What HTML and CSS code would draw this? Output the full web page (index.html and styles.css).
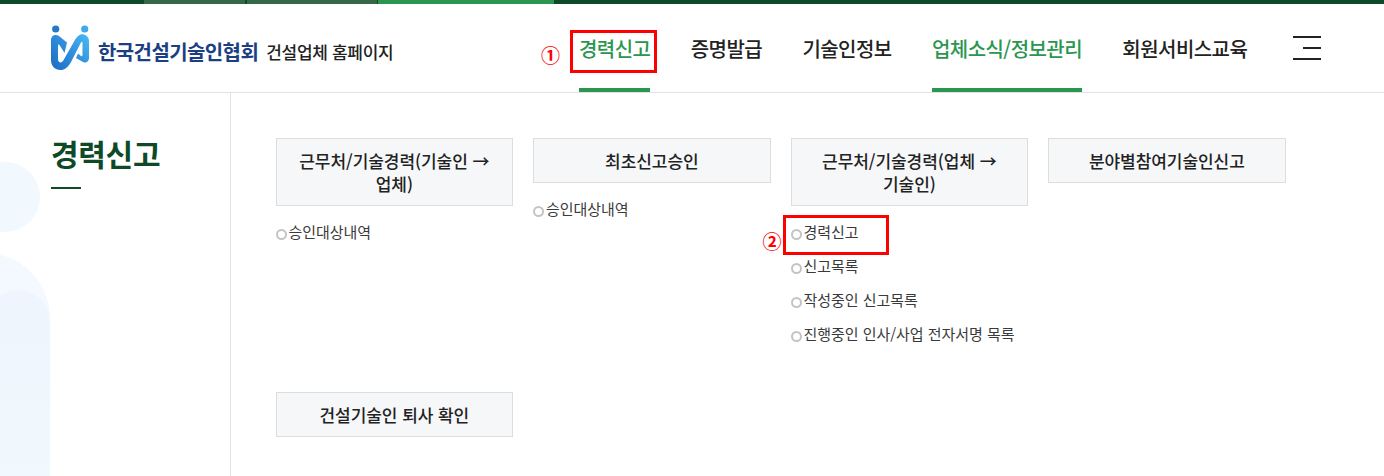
FILE: index.html
```html
<!DOCTYPE html>
<html lang="ko">
<head>
<meta charset="utf-8">
<title>경력신고</title>
<link rel="stylesheet" href="styles.css">
</head>
<body>
<div class="topbar">
  <span class="seg seg-a"></span><span class="seg seg-b"></span><span class="seg seg-c"></span><span class="seg seg-d"></span><span class="seg seg-e"></span>
</div>
<header class="header">
  <a class="logo">
    <svg class="logo-mark" width="38" height="45" viewBox="0 0 38 45">
      <defs>
        <linearGradient id="lg1" x1="0" y1="1" x2="1" y2="0.2">
          <stop offset="0" stop-color="#1d6cc0"/><stop offset="0.55" stop-color="#2f8ddc"/><stop offset="1" stop-color="#45b4f0"/>
        </linearGradient>
      </defs>
      <circle cx="4.7" cy="4" r="3.6" fill="#2478c8"/>
      <circle cx="33.7" cy="4" r="3.6" fill="#3fa9ec"/>
      <path d="M0 15C0 10.500 4.500 8.500 8 11L16 17.500L13.500 28L8.500 20C8 19 7 19.500 7 20.500V34C7 37.500 10 38.500 12 36L24.500 14C27 10 30 8.500 33 9.500C36 10.500 38 13 38 16V33C38 36.500 35 38.500 32 37L25 33L27 28.500L30 31C31 31.500 31.500 31 31.500 30V18C31.500 16.500 30.500 16.500 30 17.500L20 37C17 42.500 13.500 45 9.500 45C4 45 0 41 0 35Z" fill="url(#lg1)"/>
    </svg>
    <span class="logo-name">한국건설기술인협회</span>
    <span class="logo-sub">건설업체 홈페이지</span>
  </a>
  <nav class="gnb">
    <a class="gnb-item is-active mark-host">경력신고
      <span class="mark-box mark-gnb"></span><span class="mark-num mark-num-gnb">①</span>
    </a>
    <a class="gnb-item">증명발급</a>
    <a class="gnb-item">기술인정보</a>
    <a class="gnb-item is-active">업체소식/정보관리</a>
    <a class="gnb-item">회원서비스교육</a>
  </nav>
  <button class="burger" aria-label="전체메뉴"><span></span><span class="short"></span><span></span></button>
</header>
<main class="main">
  <aside class="side">
    <div class="deco deco-circle"></div>
    <div class="deco deco-body"></div>
    <div class="deco deco-inner"></div>
    <h1 class="side-title">경력신고</h1>
  </aside>
  <section class="content">
    <div class="group">
      <h2 class="group-title">근무처/기술경력(기술인 → 업체)</h2>
      <ul class="sub"><li>승인대상내역</li></ul>
    </div>
    <div class="group">
      <h2 class="group-title">최초신고승인</h2>
      <ul class="sub"><li>승인대상내역</li></ul>
    </div>
    <div class="group">
      <h2 class="group-title">근무처/기술경력(업체 → 기술인)</h2>
      <ul class="sub">
        <li class="mark-host">경력신고<span class="mark-box mark-sub"></span><span class="mark-num mark-num-sub">②</span></li>
        <li>신고목록</li>
        <li>작성중인 신고목록</li>
        <li>진행중인 인사/사업 전자서명 목록</li>
      </ul>
    </div>
    <div class="group">
      <h2 class="group-title">분야별참여기술인신고</h2>
    </div>
    <div class="group">
      <h2 class="group-title">건설기술인 퇴사 확인</h2>
    </div>
  </section>
</main>
</body>
</html>
```
FILE: styles.css
```css
* { box-sizing: border-box; }
html, body { margin: 0; padding: 0; }
body {
  width: 1384px;
  height: 476px;
  overflow: hidden;
  background: #fff;
  color: #222;
  font-family: "Noto Sans CJK KR", "Noto Sans", sans-serif;
}
.topbar { display: flex; height: 4px; background: #0f4a28; }
.seg { display: block; height: 4px; }
.seg-a { width: 144px; background: #0f4a28; }
.seg-b { width: 101px; background: #356847; margin-right: 2px; }
.seg-c { width: 130px; background: #356847; margin-right: 1px; }
.seg-d { width: 176px; background: #2a9650; }

.header {
  display: flex;
  align-items: stretch;
  height: 89px;
  padding-left: 51px;
  border-bottom: 1px solid #e2e2e2;
}
.logo { display: flex; align-items: center; width: 528px; }
.logo-mark { flex: none; margin-top: -1px; }
.logo-name {
  margin: 6px 0 0 9px;
  font-size: 20px;
  font-weight: 700;
  letter-spacing: -0.6px;
  color: #1c3f83;
}
.logo-sub {
  margin: 6px 0 0 8px;
  font-size: 17px;
  font-weight: 500;
  letter-spacing: -0.3px;
  color: #222;
}
.gnb { display: flex; gap: 40.3px; }
.gnb-item {
  position: relative;
  display: flex;
  align-items: center;
  height: 88px;
  padding-top: 4px;
  border-bottom: 4px solid transparent;
  font-size: 20px;
  font-weight: 500;
  letter-spacing: -0.55px;
  color: #222;
  white-space: nowrap;
}
.gnb-item.is-active { color: #2a9650; border-bottom-color: #2a9650; }
.burger {
  display: flex;
  flex-direction: column;
  justify-content: space-between;
  align-items: flex-end;
  width: 28px;
  height: 24px;
  margin: 32px 0 0 46px;
  padding: 0;
  border: 0;
  background: none;
}
.burger span { display: block; width: 28px; height: 2px; background: #222; }
.burger .short { width: 18px; }

.main { display: flex; height: 383px; }
.side {
  position: relative;
  flex: none;
  width: 231px;
  padding: 41px 0 0 51px;
  border-right: 1px solid #e2e2e2;
  overflow: hidden;
}
.side-title {
  position: relative;
  width: 30px;
  margin: 0;
  white-space: nowrap;
  font-size: 30px;
  line-height: 38px;
  font-weight: 700;
  letter-spacing: -0.3px;
  color: #0f4a28;
}
.side-title::after {
  content: "";
  display: block;
  width: 30px;
  height: 2px;
  margin-top: 15px;
  background: #0f4a28;
}
.deco { position: absolute; }
.deco-circle {
  left: -30px; top: 69px;
  width: 70px; height: 70px;
  border-radius: 50%;
  background: #f1f8fe;
}
.deco-body {
  left: -80px; top: 160px;
  width: 130px; height: 240px;
  border-radius: 65px 65px 0 0;
  background: #f3f9fe;
}
.deco-inner {
  left: -14px; top: 197px;
  width: 64px; height: 200px;
  border-radius: 32px 32px 0 0;
  background: linear-gradient(#eef5fe, #f1f9fd);
}

.content {
  display: grid;
  grid-template-columns: repeat(4, 237.5px);
  grid-template-rows: 254px auto;
  column-gap: 20px;
  align-content: start;
  padding: 45px 0 0 44.6px;
}
.group-title {
  display: flex;
  align-items: center;
  justify-content: center;
  margin: 0;
  padding: 10px 20px;
  background: #f6f7f9;
  border: 1px solid #dddddd;
  text-align: center;
  word-break: keep-all;
  font-size: 17px;
  line-height: 23px;
  font-weight: 500;
  letter-spacing: -0.05px;
  color: #222;
}
.sub { margin: 8.6px 0 0; padding: 0; list-style: none; }
.sub li {
  position: relative;
  display: flex;
  align-items: center;
  height: 34px;
  padding-left: 13px;
  font-size: 15px;
  letter-spacing: -0.05px;
  color: #3a3a3a;
  white-space: nowrap;
}
.sub li::before {
  content: "";
  position: absolute;
  left: 0; top: 14px;
  width: 7px; height: 7px;
  border: 2px solid #c4c4c4;
  border-radius: 50%;
}
.mark-host { position: relative; }
.mark-box { position: absolute; border: 3px solid #f00; }
.mark-gnb { left: -9px; top: 26px; width: 87px; height: 43px; }
.mark-sub { left: -8px; top: 0; width: 106px; height: 40px; }
.mark-num { position: absolute; color: #f00; font-size: 19px; font-weight: 700; line-height: 20px; letter-spacing: 0; }
.mark-num-gnb { left: -38px; top: 41px; }
.mark-num-sub { left: -28px; top: 16px; }
```
